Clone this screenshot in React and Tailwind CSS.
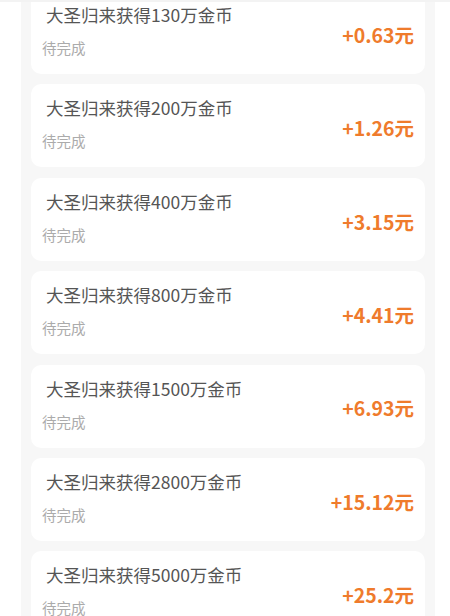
const tasks = [
  { coins: "130", reward: "+0.63元" },
  { coins: "200", reward: "+1.26元" },
  { coins: "400", reward: "+3.15元" },
  { coins: "800", reward: "+4.41元" },
  { coins: "1500", reward: "+6.93元" },
  { coins: "2800", reward: "+15.12元" },
  { coins: "5000", reward: "+25.2元" },
];

const TaskCard = ({ coins, reward }) => {
  return (
    <div className="flex h-[83px] justify-between rounded-[10px] bg-white pr-[11px]">
      <div className="flex flex-col pt-[12px]">
        <span className="pl-[15px] text-[17.5px] leading-6 text-[#555555]">
          大圣归来获得{coins}万金币
        </span>
        <span className="mt-[11px] pl-[11px] text-[14.5px] leading-5 text-[#ababab]">
          待完成
        </span>
      </div>
      <span className="mt-[4px] self-center text-[19.5px] font-bold text-[#ef7b2c]">
        {reward}
      </span>
    </div>
  );
};

const App = () => {
  return (
    <div
      className="h-[616px] overflow-hidden border-t-2 border-[#f3f3f3] bg-white"
      style={{ fontFamily: '"Noto Sans CJK SC", "Noto Sans", sans-serif' }}
    >
      <div className="-mt-[11px] ml-[21px] mr-[15px] flex flex-col gap-[10.4px] bg-[#f7f7f7] px-[10px]">
        {tasks.map((t) => (
          <TaskCard key={t.coins} coins={t.coins} reward={t.reward} />
        ))}
      </div>
    </div>
  );
};

export default App;
